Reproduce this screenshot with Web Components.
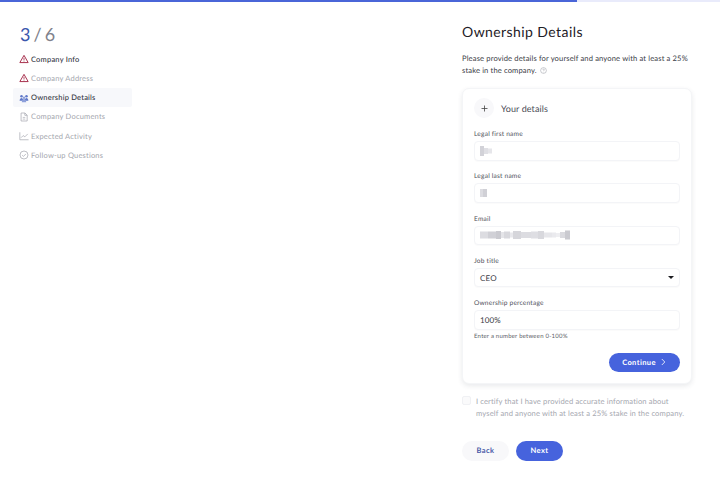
<!DOCTYPE html>
<html lang="en"><head><meta charset="utf-8"><title>Ownership Details</title>
<style>
html,body{margin:0;background:#fff}
body{width:720px;height:485px;overflow:hidden;font-family:Lato,"Noto Sans",sans-serif;color:#2b2d36;text-rendering:geometricPrecision}
</style></head><body>
<app-page></app-page>
<script>
const def=(name,html)=>customElements.define(name,class extends HTMLElement{
  connectedCallback(){ if(this.shadowRoot) return; this.attachShadow({mode:'open'}).innerHTML=typeof html==='function'?html(this):html; }
});
const icons={
 warn:'<path d="M6 1.6 11 10.3H1Z" fill="none" stroke="#a8324f" stroke-width="1.2" stroke-linejoin="round"/><path d="M6 4.6v3M6 8.2v.8" stroke="#a8324f" stroke-width="1"/>',
 people:'<g fill="#5f78c9"><circle cx="3" cy="4" r="1.5"/><circle cx="9" cy="4" r="1.5"/><path d="M.7 9.200C.9 7 1.800 6 3 6s2 1 2.300 3.200ZM6.700 9.200C7 7 7.800 6 9 6s2.100 1 2.300 3.200Z"/></g><circle cx="6" cy="5.600" r="1.500" fill="#8ea0db"/><path d="M3.300 11c.3-2.400 1.300-3.700 2.700-3.700s2.400 1.300 2.700 3.700Z" fill="#8ea0db"/>',
 doc:'<path d="M2.500 1.200h4.700l2.600 2.600v7H2.500Z M7 1.200v2.800h2.800" fill="none" stroke="#a9abb3" stroke-width=".9" stroke-linejoin="round"/><path d="M4.500 6.500h3M4.500 8.500h3" stroke="#a9abb3" stroke-width=".8"/>',
 chart:'<path d="M1 1.500v9h10.500" fill="none" stroke="#a9abb3" stroke-width=".9"/><path d="M2.500 8 5 5.500l2 1.500 3.500-3.500" fill="none" stroke="#a9abb3" stroke-width=".9"/>',
 check:'<circle cx="6" cy="6" r="4.800" fill="none" stroke="#a9abb3" stroke-width=".9"/><path d="M3.800 6.200 5.400 7.700 8.300 4.700" fill="none" stroke="#a9abb3" stroke-width=".9"/>'
};
def('app-page',`<style>
:host{display:block;height:485px}
.bar{height:2px;background:#e9ebfb;display:flex}.bar i{display:block;width:577px;background:#4a65d8}
.grid{display:grid;grid-template-columns:119px 230px;column-gap:330px;padding:0 0 0 13px}
</style>
<div class="bar"><i></i></div>
<div class="grid"><step-nav></step-nav><owner-main></owner-main></div>`);
def('step-nav',`<style>
:host{display:block;padding-top:22px}
.count{font-size:18px;line-height:20px;word-spacing:-1.500px;color:#7f828c;padding-left:7px;margin-bottom:5.700px;font-weight:400}
.count b{font-weight:400;color:#3a57ad}
</style>
<div class="count"><b>3</b> / 6</div>
<nav-item icon="warn" strong>Company Info</nav-item>
<nav-item icon="warn">Company Address</nav-item>
<nav-item icon="people" strong active>Ownership Details</nav-item>
<nav-item icon="doc">Company Documents</nav-item>
<nav-item icon="chart">Expected Activity</nav-item>
<nav-item icon="check">Follow-up Questions</nav-item>`);
def('nav-item',el=>`<style>
:host{display:flex;align-items:center;gap:2px;height:19.200px;padding-left:6px;font-size:7.500px;letter-spacing:.2px;color:${el.hasAttribute('strong')?'#33353f':'#a4a6ae'};font-weight:${el.hasAttribute('strong')?500:400};background:${el.hasAttribute('active')?'#f7f8fb':'none'};border-radius:2px}
svg{width:10px;height:10px;flex:none}
</style><svg viewBox="0 0 12 12">${icons[el.getAttribute('icon')]}</svg><span><slot></slot></span>`);
def('owner-main',`<style>
:host{display:block}
h1{margin:0;font-size:14px;line-height:18px;font-weight:400;letter-spacing:.42px;color:#1e2026;padding-top:21px}
p{margin:11px 0 12px;font-size:7.600px;line-height:12px;letter-spacing:.13px;color:#3c3e48}
svg{width:7px;height:7px;vertical-align:-1px;margin-left:1px}
.card{box-sizing:border-box;height:296px;border-radius:7px;background:#fff;border:1px solid #f4f5f7;box-shadow:0 2px 5px rgba(40,45,70,.1);padding:9px 11px 0}
.head{display:flex;align-items:center;height:20px;font-size:9px;letter-spacing:.1px;color:#4a4c56;margin-bottom:12px}
.plus{width:20px;height:20px;border-radius:50%;background:#f8f8fa;display:flex;align-items:center;justify-content:center;margin-right:7px;flex:none}
.plus svg{width:7px;height:7px;margin:0;vertical-align:0}
.foot{display:flex;justify-content:flex-end;margin-top:12px}
.cert{display:flex;gap:5px;margin-top:11px;width:224px;font-size:7.600px;line-height:12px;letter-spacing:.12px;color:#a6a8b0}
.box{box-sizing:border-box;width:9px;height:9px;border:1px solid #f0f1f4;border-radius:2px;background:#fafafb;margin-top:1px;flex:none}
.btns{display:flex;gap:7px;margin-top:22px}
</style>
<h1>Ownership Details</h1>
<p>Please provide details for yourself and anyone with at least a 25% stake in the company. <svg viewBox="0 0 8 8"><circle cx="4" cy="4" r="3.300" fill="none" stroke="#9a9ca5" stroke-width=".6"/><path d="M3 3.200c.2-1 2-1 2 0 0 .7-1 .7-1 1.500M4 5.600v.5" fill="none" stroke="#9a9ca5" stroke-width=".6"/></svg></p>
<div class="card">
 <div class="head"><span class="plus"><svg viewBox="0 0 7 7"><path d="M3.500.5v6M.5 3.500h6" stroke="#444" stroke-width=".8"/></svg></span>Your details</div>
 <form-field label="Legal first name"><redacted-text bars="0,4,10,#d2d2d8;4,4,6,#dfdfe4;8,4,5,#e6e6ea"></redacted-text></form-field>
 <form-field label="Legal last name"><redacted-text bars="0,3,8,#dcdce1;3,4,8,#d0d0d6"></redacted-text></form-field>
 <form-field label="Email"><redacted-text bars="0,8,7,#dcdce1;8,8,7,#d0d0d6;16,5,8,#cacad0;21,3,6,#e4e4e8;24,6,7,#d8d8dd;30,3,5,#e8e8ec;33,8,8,#d6d6db;41,10,6,#dcdce1;51,7,7,#dedee3;58,6,8,#d8d8dd;64,8,5,#e6e6ea;72,4,5,#eaeaee;76,4,4,#eeeef1;80,5,6,#dadadf;85,5,9,#cacad0"></redacted-text></form-field>
 <form-field label="Job title" select>CEO</form-field>
 <form-field label="Ownership percentage" style="margin-bottom:3px">100%</form-field>
 <div style="font-size:6px;line-height:8px;letter-spacing:.22px;color:#5b5d66">Enter a number between 0-100%</div>
 <div class="foot"><pill-button primary width="71"><span>Continue</span><svg viewBox="0 0 8 8" style="width:8px;height:8px;margin-left:3px"><path d="M2.800 1 5.800 4 2.800 7" fill="none" stroke="#fff" stroke-width=".8"/></svg></pill-button></div>
</div>
<div class="cert"><span class="box"></span><span>I certify that I have provided accurate information about myself and anyone with at least a 25% stake in the company.</span></div>
<div class="btns"><pill-button width="47">Back</pill-button><pill-button primary width="47">Next</pill-button></div>`);
def('form-field',el=>`<style>
:host{display:block;width:206px;margin-bottom:11.800px}
label{display:block;font-size:6.600px;line-height:9px;letter-spacing:.2px;color:#4f515b;margin-bottom:2px}
.in{box-sizing:border-box;height:19.500px;border:1px solid #f3f4f7;border-radius:4px;background:#fff;display:flex;align-items:center;padding:0 5px;font-size:8px;letter-spacing:.15px;color:#3a3c45;box-shadow:0 1px 1px rgba(40,45,70,.02)}
.arr{margin-left:auto;width:0;height:0;border:3px solid transparent;border-top:3.500px solid #1c1c20;border-bottom:0}
</style><label>${el.getAttribute('label')}</label><div class="in"><slot></slot>${el.hasAttribute('select')?'<span class="arr"></span>':''}</div>`);
def('redacted-text',el=>{
  const bars=el.getAttribute('bars').split(';').map(s=>s.split(','));
  const r=bars.map(([x,w,h,c])=>`<rect x="${x}" y="${(10-h)/2}" width="${w}" height="${h}" fill="${c}"/>`).join('');
  return `<style>:host{display:block;line-height:0}svg{display:block;filter:blur(.6px)}</style><svg width="92" height="10" aria-hidden="true">${r}</svg>`;
});
def('pill-button',el=>{const p=el.hasAttribute('primary');return `<style>
:host{display:flex;align-items:center;justify-content:center;box-sizing:border-box;width:${el.getAttribute('width')}px;height:19.500px;border-radius:10px;font-size:7.500px;font-weight:700;letter-spacing:.4px;background:${p?'#4663dd':'#f8f8fa'};color:${p?'#fff':'#4a5aa8'}}
</style><slot></slot>`});
</script>
</body></html>
